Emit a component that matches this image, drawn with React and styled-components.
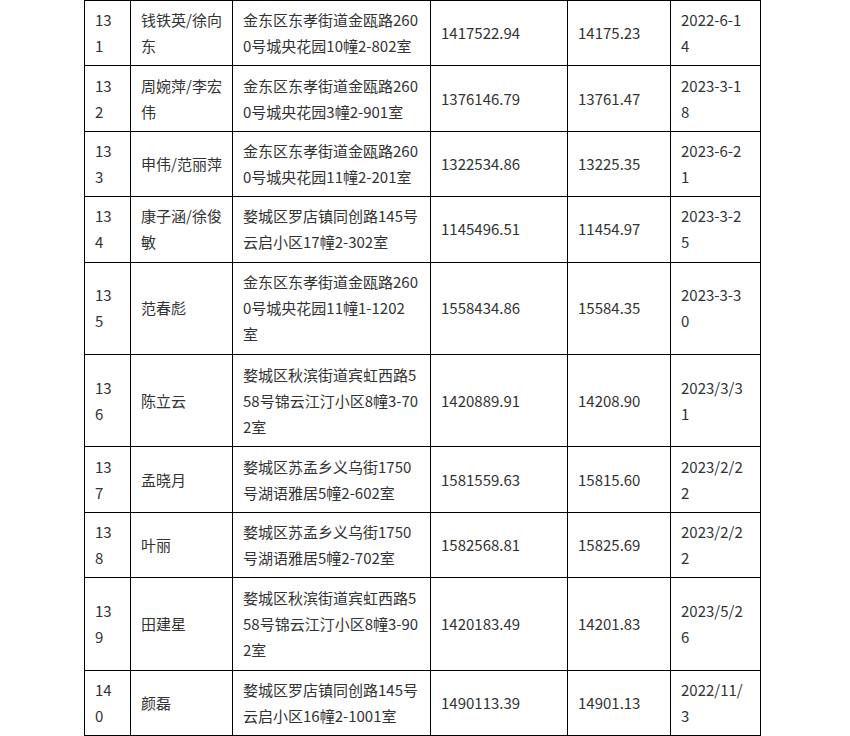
import React from "react";
import styled, { createGlobalStyle } from "styled-components";

const GlobalStyle = createGlobalStyle`
  html, body {
    margin: 0;
    padding: 0;
    background: #ffffff;
  }
`;

const Page = styled.div`
  width: 850px;
  height: 736px;
  overflow: hidden;
  display: flex;
  padding-left: 84px;
  box-sizing: border-box;
`;

const Table = styled.table`
  width: 676px;
  table-layout: fixed;
  border-collapse: collapse;
  font-family: "Noto Sans CJK SC", "Microsoft YaHei", sans-serif;
  font-size: 15px;
  line-height: 26px;
  color: #333333;
`;

const Cell = styled.td`
  border: 1px solid #000000;
  padding: 5px ${(p) => p.$padRight}px 5px 10px;
  vertical-align: middle;
  word-break: break-all;
  overflow-wrap: anywhere;
`;

// width of each column and the right padding that makes the text wrap like the original
const columns = [
  { width: 46, padRight: 14 },
  { width: 102, padRight: 10 },
  { width: 198, padRight: 11 },
  { width: 137, padRight: 10 },
  { width: 103, padRight: 10 },
  { width: 90, padRight: 15 },
];

const rows = [
  ["131", "钱铁英/徐向东", "金东区东孝街道金瓯路2600号城央花园10幢2-802室", "1417522.94", "14175.23", "2022-6-14"],
  ["132", "周婉萍/李宏伟", "金东区东孝街道金瓯路2600号城央花园3幢2-901室", "1376146.79", "13761.47", "2023-3-18"],
  ["133", "申伟/范丽萍", "金东区东孝街道金瓯路2600号城央花园11幢2-201室", "1322534.86", "13225.35", "2023-6-21"],
  ["134", "康子涵/徐俊敏", "婺城区罗店镇同创路145号云启小区17幢2-302室", "1145496.51", "11454.97", "2023-3-25"],
  ["135", "范春彪", "金东区东孝街道金瓯路2600号城央花园11幢1-1202室", "1558434.86", "15584.35", "2023-3-30"],
  ["136", "陈立云", "婺城区秋滨街道宾虹西路558号锦云江汀小区8幢3-702室", "1420889.91", "14208.90", "2023/3/31"],
  ["137", "孟晓月", "婺城区苏孟乡义乌街1750号湖语雅居5幢2-602室", "1581559.63", "15815.60", "2023/2/22"],
  ["138", "叶丽", "婺城区苏孟乡义乌街1750号湖语雅居5幢2-702室", "1582568.81", "15825.69", "2023/2/22"],
  ["139", "田建星", "婺城区秋滨街道宾虹西路558号锦云江汀小区8幢3-902室", "1420183.49", "14201.83", "2023/5/26"],
  ["140", "颜磊", "婺城区罗店镇同创路145号云启小区16幢2-1001室", "1490113.39", "14901.13", "2022/11/3"],
];

export default function App() {
  return (
    <>
      <GlobalStyle />
      <Page>
        <Table>
          <colgroup>
            {columns.map((c, i) => (
              <col key={i} style={{ width: c.width }} />
            ))}
          </colgroup>
          <tbody>
            {rows.map((row) => (
              <tr key={row[0]}>
                {row.map((text, i) => (
                  <Cell key={i} $padRight={columns[i].padRight}>
                    {text}
                  </Cell>
                ))}
              </tr>
            ))}
          </tbody>
        </Table>
      </Page>
    </>
  );
}
